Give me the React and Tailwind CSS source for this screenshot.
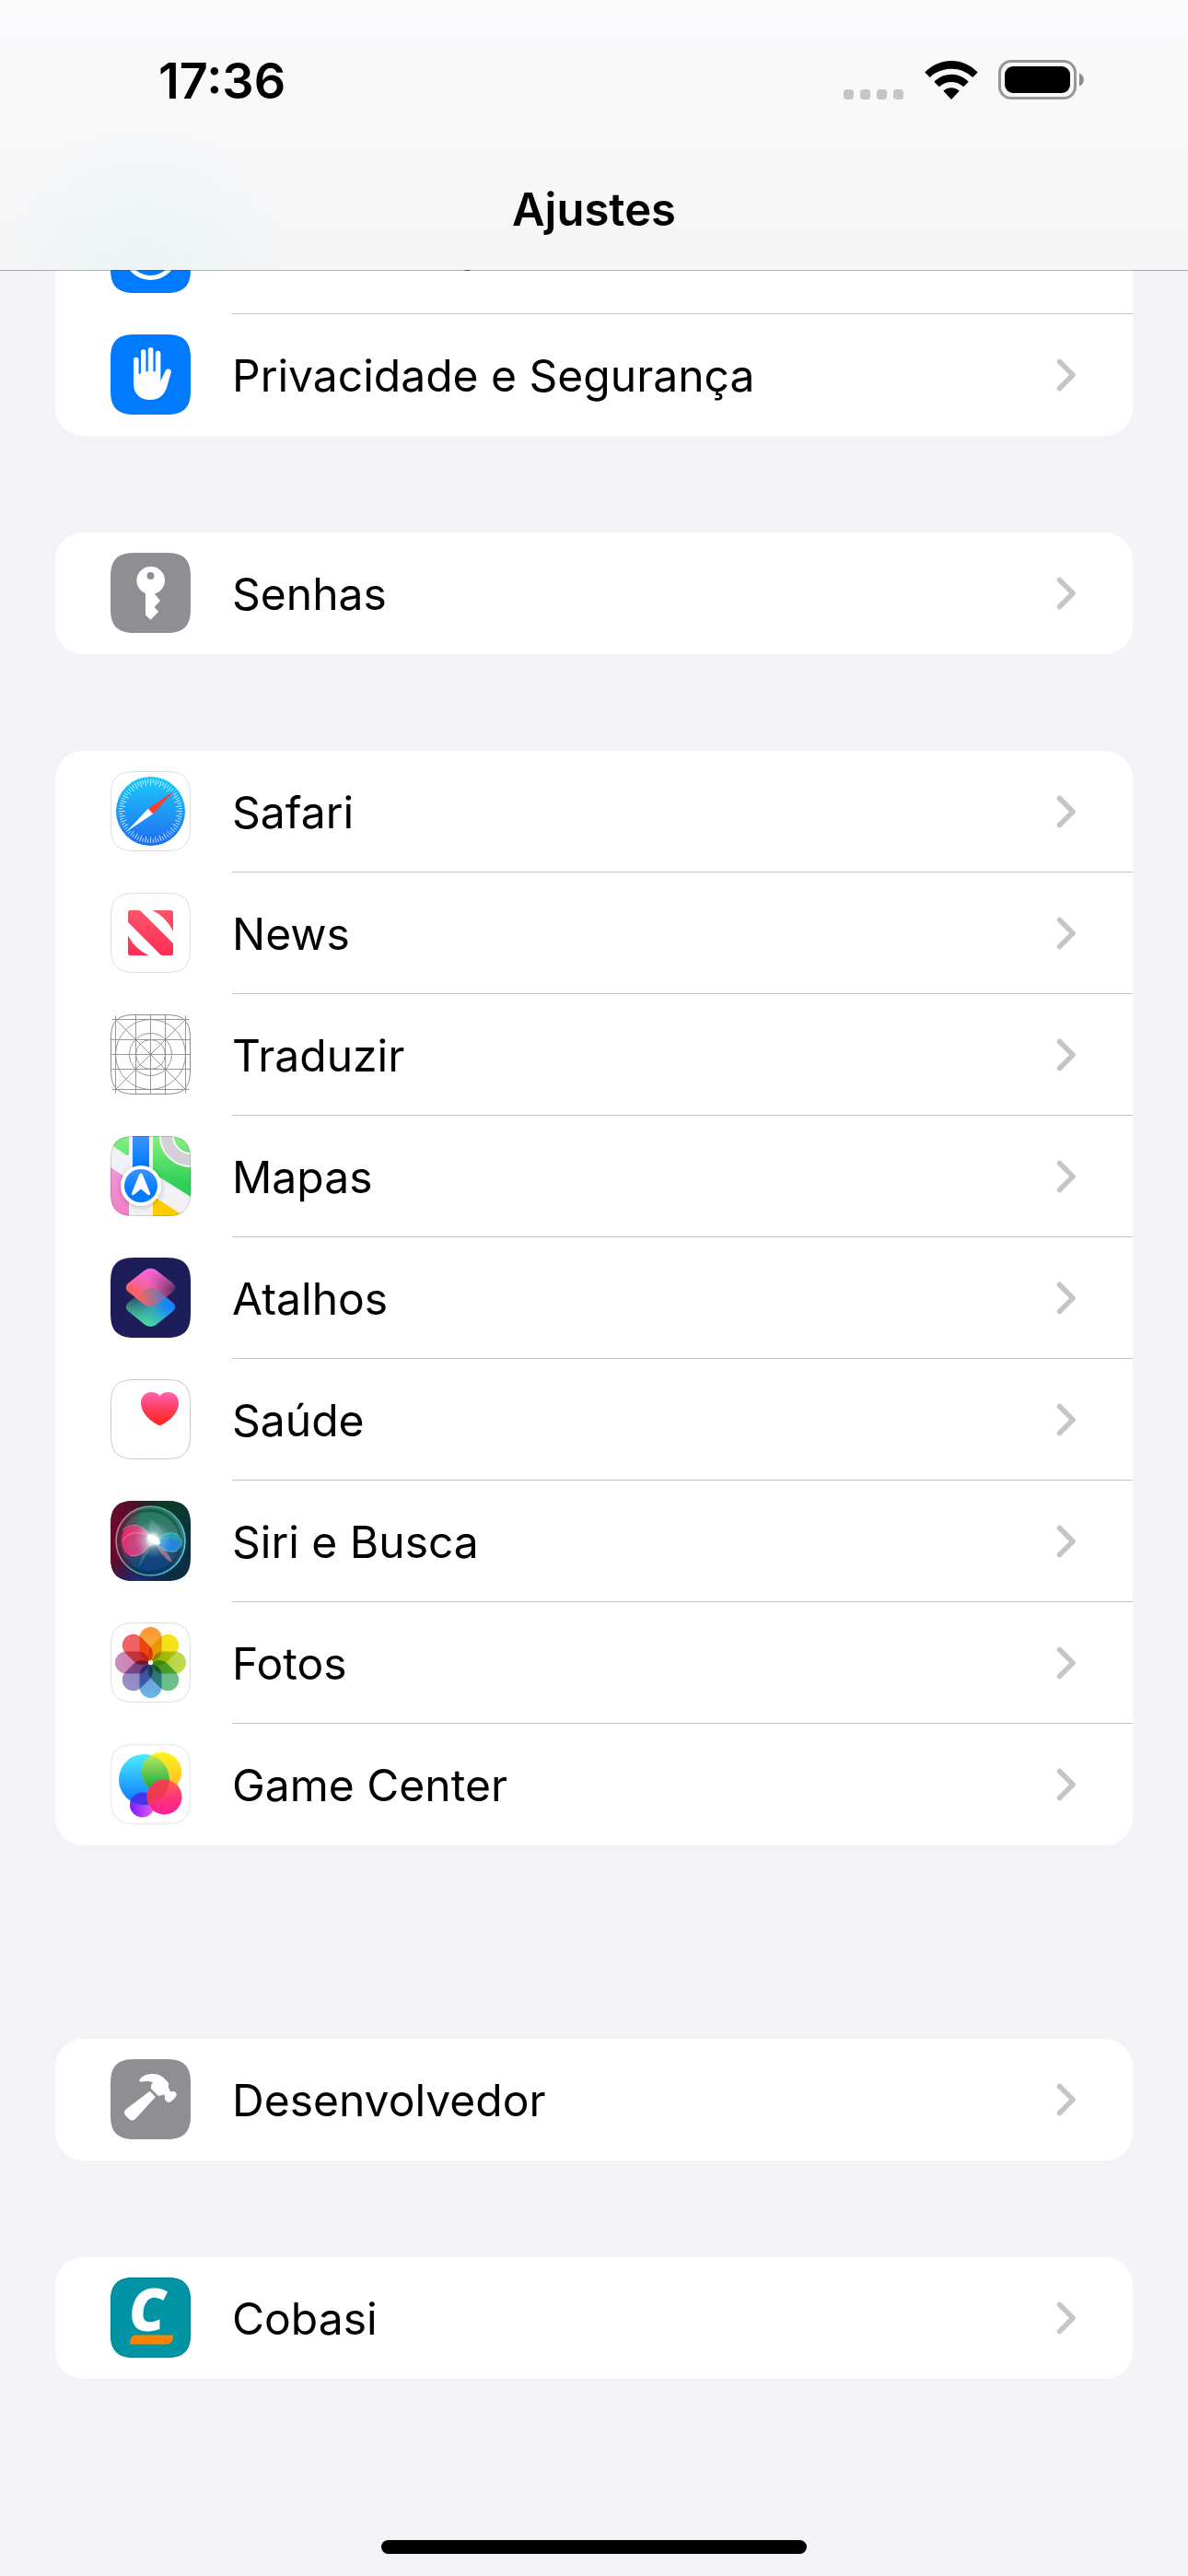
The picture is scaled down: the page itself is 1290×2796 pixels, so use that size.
import React from "react";

const Tile = ({ bg = "#fff", stroke, strokeWidth = 1, children }) => (
  <svg viewBox="0 0 87 87" className="mb-px size-[87px] shrink-0 overflow-visible" aria-hidden="true">
    <path d={SQ} fill={bg} />
    {children}
    {stroke && <path d={SQIN} fill="none" stroke={stroke} strokeWidth={strokeWidth} />}
  </svg>
);

const SQ =
  "M20 0.3C24 0 26 0 30 0H57C61 0 63 0 67 0.3C79 1.5 85.500 8 86.700 20C87 24 87 26 87 30V57C87 61 87 63 86.700 67C85.500 79 79 85.500 67 86.700C63 87 61 87 57 87H30C26 87 24 87 20 86.700C8 85.500 1.500 79 0.300 67C0 63 0 61 0 57V30C0 26 0 24 0.300 20C1.500 8 8 1.500 20 0.300Z";
const SQIN =
  "M20 0.8C24 0.500 26 0.500 30 0.500H57C61 0.500 63 0.500 67 0.800C79 2 85 8 86.200 20C86.500 24 86.500 26 86.500 30V57C86.500 61 86.500 63 86.200 67C85 79 79 85 67 86.200C63 86.500 61 86.500 57 86.500H30C26 86.500 24 86.500 20 86.200C8 85 2 79 0.800 67C0.500 63 0.500 61 0.500 57V30C0.500 26 0.500 24 0.800 20C2 8 8 2 20 0.800Z";

const AccessibilityIcon = () => (
  <Tile bg="#007aff">
    <circle cx="43.500" cy="43.500" r="27" fill="none" stroke="#fff" strokeWidth="5" />
    <circle cx="43.500" cy="29" r="4" fill="#fff" />
    <path d="M27 37l12 3v8l-5 11M60 37l-12 3v8l5 11" fill="none" stroke="#fff" strokeWidth="4" strokeLinecap="round" />
  </Tile>
);

const HandIcon = () => (
  <Tile bg="#007aff">
    <path
      fill="#fff"
      d="M25 27.500a2.800 2.800 0 0 1 5.600 0V43.300l2.400-1.300V19a2.700 2.700 0 0 1 5.400 0V40.500l2.400-0.500V16.800a2.800 2.800 0 0 1 5.600 0V40l2.400 0.500V20.500a2.800 2.800 0 0 1 5.600 0V50.500l5.200-11c1.500-3 7-2.600 6.200 1.500l-4.200 15C58.600 66 52.500 71 43 71S25 65.500 25 54Z"
    />
  </Tile>
);

const KeyIcon = () => (
  <Tile bg="#8e8e93">
    <path
      fill="#fff"
      fillRule="evenodd"
      d="M43.500 15a15 15 0 0 0-5.500 29V67.500l5.500 5.300 8.700-8.800-4.700-5 6.500-7-6.200-7.500A15 15 0 0 0 43.500 15Zm0 6a4 4 0 1 1 0 8 4 4 0 0 1 0-8Z"
    />
  </Tile>
);

const TICKS = Array.from({ length: 72 }, (_, i) => i);

const SafariIcon = () => (
  <Tile stroke="#dedede">
    <defs>
      <linearGradient id="safari" x1="0" y1="0" x2="0" y2="1">
        <stop offset="0" stopColor="#1ccbfb" />
        <stop offset="0.500" stopColor="#1e9bf6" />
        <stop offset="1" stopColor="#1f6cf0" />
      </linearGradient>
    </defs>
    <circle cx="43.500" cy="43.500" r="37.500" fill="url(#safari)" />
    {TICKS.map((i) => (
      <path
        key={i}
        d={i % 2 ? "M43.500 9v4" : "M43.500 9v6.500"}
        stroke="#fff"
        strokeWidth="0.800"
        opacity="0.900"
        transform={`rotate(${i * 5} 43.500 43.500)`}
      />
    ))}
    <path d="M70 21L40.800 40.800l5.400 5.400Z" fill="#ff3b30" />
    <path d="M17 66L40.800 40.800l5.400 5.400Z" fill="#fff" />
  </Tile>
);

const NewsIcon = () => (
  <Tile stroke="#dedede">
    <defs>
      <linearGradient id="news" x1="0" y1="19" x2="0" y2="68" gradientUnits="userSpaceOnUse">
        <stop offset="0" stopColor="#ff5468" />
        <stop offset="1" stopColor="#ff2d55" />
      </linearGradient>
    </defs>
    <g fill="url(#news)">
      <path d="M21.500 19H30q2 0 3.500 1.500L68 55V65.500q0 2.500-2.500 2.500H57q-2 0-3.500-1.500L19 32V21.500Q19 19 21.500 19Z" />
      <path d="M45.500 19H65.500Q68 19 68 21.500V41.500Q60 26 45.500 19Z" />
      <path d="M19 46V65.500Q19 68 21.500 68H41.500Q25 60 19 46Z" />
    </g>
  </Tile>
);

const TranslateIcon = () => (
  <Tile stroke="#8c8c8c">
    <g fill="none" stroke="#8c8c8c" strokeWidth="0.900">
      <path d="M5.500 1.500V85.500M81.500 1.500V85.500M27.500 0V87M43.500 0V87M59.500 0V87M1.500 5.500H85.500M1.500 81.500H85.500M0 27.500H87M0 43.500H87M0 59.500H87M5.500 5.500L81.500 81.500M81.500 5.500L5.500 81.500" />
      <circle cx="43.500" cy="43.500" r="38" />
      <circle cx="43.500" cy="43.500" r="23" />
      <circle cx="43.500" cy="43.500" r="16" />
    </g>
  </Tile>
);

const MapsIcon = () => (
  <Tile bg="#f1f1f6" stroke="#00000026">
    <defs>
      <clipPath id="mapsClip">
        <path d={SQ} />
      </clipPath>
      <linearGradient id="mapsGreen" x1="0" y1="0" x2="0" y2="60" gradientUnits="userSpaceOnUse">
        <stop offset="0" stopColor="#86f07f" />
        <stop offset="0.850" stopColor="#30d158" />
      </linearGradient>
      <linearGradient id="mapsPink" x1="0" y1="34" x2="0" y2="87" gradientUnits="userSpaceOnUse">
        <stop offset="0" stopColor="#ee9ad8" />
        <stop offset="1" stopColor="#f57cc6" />
      </linearGradient>
      <linearGradient id="mapsBlue" x1="0" y1="0" x2="0" y2="34" gradientUnits="userSpaceOnUse">
        <stop offset="0" stopColor="#3c93fc" />
        <stop offset="1" stopColor="#007aff" />
      </linearGradient>
      <linearGradient id="mapsPin" x1="0" y1="0" x2="0" y2="1">
        <stop offset="0" stopColor="#3c93fc" />
        <stop offset="0.700" stopColor="#007aff" />
      </linearGradient>
      <filter id="mapsShadow" x="-0.300" y="-0.300" width="1.600" height="1.600">
        <feDropShadow dx="0" dy="1" stdDeviation="3" floodColor="#000" floodOpacity="0.250" />
      </filter>
    </defs>
    <g clipPath="url(#mapsClip)">
      <path d="M0 9V0H20V19q0 3-3 1.500Z" fill="url(#mapsGreen)" />
      <path d="M46 0H87V66L46 40Z" fill="url(#mapsGreen)" />
      <path d="M0 34L20 47V87H0Z" fill="url(#mapsPink)" />
      <path d="M46 65L80 87H46Z" fill="#ffcc00" />
      <circle cx="87" cy="0" r="26" fill="none" stroke="#fff" strokeWidth="16" />
      <circle cx="87" cy="0" r="26" fill="none" stroke="#d1d1d6" strokeWidth="12.500" />
      <path d="M24 0H42V40H24Z" fill="url(#mapsBlue)" />
      <circle cx="33" cy="54" r="22" fill="#fff" filter="url(#mapsShadow)" />
      <circle cx="33" cy="54" r="18" fill="url(#mapsPin)" />
      <path d="M33 40.500c1 0 1.600 0.700 2 1.700L43 62c0.800 2-0.900 3-2.500 1.700L33 57.500l-7.500 6.200C23.900 65 22.200 64 23 62l8-19.800c0.400-1 1-1.700 2-1.700Z" fill="#fff" />
    </g>
  </Tile>
);

const DIAMOND_LOW = "M37 35q6.500-4.500 13 0L68 49q4.500 4.500 0 9L50 72.500q-6.500 4.500-13 0L19 58q-4.500-4.500 0-9Z";

const ShortcutsIcon = () => (
  <Tile bg="#1d1e59">
    <defs>
      <linearGradient id="scTop" x1="22" y1="45" x2="66" y2="25" gradientUnits="userSpaceOnUse">
        <stop offset="0" stopColor="#ff5f4f" />
        <stop offset="0.500" stopColor="#f062a8" />
        <stop offset="1" stopColor="#53285f" />
      </linearGradient>
      <linearGradient id="scPink" x1="0" y1="11" x2="0" y2="36" gradientUnits="userSpaceOnUse">
        <stop offset="0" stopColor="#ff66e8" />
        <stop offset="1" stopColor="#ff66c8" stopOpacity="0" />
      </linearGradient>
      <linearGradient id="scBottom" x1="24" y1="48" x2="66" y2="60" gradientUnits="userSpaceOnUse">
        <stop offset="0" stopColor="#2c5070" />
        <stop offset="0.500" stopColor="#2e97b8" />
        <stop offset="0.850" stopColor="#1684ff" />
      </linearGradient>
      <linearGradient id="scGreen" x1="40" y1="77" x2="48" y2="50" gradientUnits="userSpaceOnUse">
        <stop offset="0" stopColor="#4ae39a" />
        <stop offset="1" stopColor="#4ae39a" stopOpacity="0" />
      </linearGradient>
      <linearGradient id="scOver" x1="30" y1="45" x2="58" y2="40" gradientUnits="userSpaceOnUse">
        <stop offset="0" stopColor="#ff6257" stopOpacity="0.900" />
        <stop offset="1" stopColor="#4b7fc4" stopOpacity="0.850" />
      </linearGradient>
      <clipPath id="scTopClip">
        <path d="M37 14q6.500-4.500 13 0L68 28q4.500 4.500 0 9L50 51q-6.500 4.500-13 0L19 37q-4.500-4.500 0-9Z" />
      </clipPath>
    </defs>
    <path d={DIAMOND_LOW} fill="url(#scBottom)" />
    <path d={DIAMOND_LOW} fill="url(#scGreen)" />
    <g clipPath="url(#scTopClip)">
      <path d="M10 5H77V60H10Z" fill="url(#scTop)" />
      <path d="M10 5H77V60H10Z" fill="url(#scPink)" />
      <path d={DIAMOND_LOW} fill="url(#scOver)" />
    </g>
  </Tile>
);

const HealthIcon = () => (
  <Tile stroke="#c8c8c8">
    <defs>
      <linearGradient id="health" x1="0" y1="0" x2="0" y2="1">
        <stop offset="0" stopColor="#ff63b4" />
        <stop offset="0.500" stopColor="#ff3c60" />
        <stop offset="1" stopColor="#ff2616" />
      </linearGradient>
    </defs>
    <path d="M53.500 18C50.500 14.500 47.500 14 44.500 14C37.500 14 33 19.500 33 26C33 37 44 46 51.500 49.500Q53.500 50.500 55.500 49.500C63 46 74 37 74 26C74 19.500 69.500 14 62.500 14C59.500 14 56.500 14.500 53.500 18Z" fill="url(#health)" />
  </Tile>
);

const SiriIcon = () => (
  <Tile bg="#0d2f42">
    <defs>
      <clipPath id="siriClip">
        <path d={SQ} />
      </clipPath>
      <linearGradient id="siriRed" x1="0" y1="30" x2="46" y2="34" gradientUnits="userSpaceOnUse">
        <stop offset="0" stopColor="#6e0a2e" />
        <stop offset="0.500" stopColor="#560a2a" stopOpacity="0.900" />
        <stop offset="1" stopColor="#3a0a24" stopOpacity="0" />
      </linearGradient>
      <radialGradient id="siriBlue" cx="30" cy="90" r="36" gradientUnits="userSpaceOnUse">
        <stop offset="0" stopColor="#1c2c80" />
        <stop offset="1" stopColor="#1a2468" stopOpacity="0" />
      </radialGradient>
      <radialGradient id="siriGreen" cx="60" cy="5" r="55" gradientUnits="userSpaceOnUse">
        <stop offset="0" stopColor="#0d3a2a" />
        <stop offset="1" stopColor="#0d3a2a" stopOpacity="0" />
      </radialGradient>
      <linearGradient id="siriOrb" x1="0" y1="6" x2="0" y2="81" gradientUnits="userSpaceOnUse">
        <stop offset="0" stopColor="#1f7a5c" />
        <stop offset="0.400" stopColor="#3c7c74" />
        <stop offset="0.650" stopColor="#2c5070" />
        <stop offset="1" stopColor="#0a3f80" />
      </linearGradient>
      <linearGradient id="siriShade" x1="6" y1="40" x2="30" y2="44" gradientUnits="userSpaceOnUse">
        <stop offset="0" stopColor="#8c1240" stopOpacity="0.950" />
        <stop offset="1" stopColor="#8c1240" stopOpacity="0" />
      </linearGradient>
      <linearGradient id="siriRim" x1="6" y1="30" x2="81" y2="60" gradientUnits="userSpaceOnUse">
        <stop offset="0" stopColor="#d87090" />
        <stop offset="0.500" stopColor="#50b090" />
        <stop offset="1" stopColor="#4fd0ee" />
      </linearGradient>
      <radialGradient id="siriGlow" cx="46" cy="42" r="20" gradientUnits="userSpaceOnUse">
        <stop offset="0" stopColor="#fff" />
        <stop offset="0.250" stopColor="#f2ffff" stopOpacity="0.850" />
        <stop offset="0.500" stopColor="#b8e6e0" stopOpacity="0.350" />
        <stop offset="1" stopColor="#b8e6e0" stopOpacity="0" />
      </radialGradient>
      <linearGradient id="siriPetal" x1="12" y1="0" x2="46" y2="0" gradientUnits="userSpaceOnUse">
        <stop offset="0" stopColor="#f5245f" />
        <stop offset="0.600" stopColor="#e04a84" />
        <stop offset="1" stopColor="#ffc8dc" />
      </linearGradient>
    </defs>
    <g clipPath="url(#siriClip)">
      <path d="M0 0H87V87H0Z" fill="url(#siriGreen)" />
      <path d="M0 0H87V87H0Z" fill="url(#siriRed)" />
      <path d="M0 0H87V87H0Z" fill="url(#siriBlue)" />
      <circle cx="43.500" cy="43.500" r="37.500" fill="url(#siriOrb)" />
      <circle cx="43.500" cy="43.500" r="37.500" fill="url(#siriShade)" stroke="url(#siriRim)" strokeWidth="1.600" />
      <circle cx="42.500" cy="44" r="33.500" fill="none" stroke="#06251f" strokeWidth="3" opacity="0.350" />
      <path d="M44 20C56 28 62 42 62 55L48 44L30 73C34 60 38 50 44 20Z" fill="#8fc4c4" opacity="0.250" />
      <path d="M48 45L64 68C55 78 34 76 30 73Z" fill="#0a4488" opacity="0.550" />
      <path d="M48 45C58 50 64 58 67 67C60 64 52 55 48 45Z" fill="#e08ca0" opacity="0.600" />
      <path d="M47 43C38 26 24 24 16 31C9 41 12 58 23 60C35 61 40 50 47 43Z" fill="url(#siriPetal)" opacity="0.950" />
      <path d="M48 43C36 32 20 33 14 43C10 52 20 62 30 58C38 54 42 46 48 43Z" fill="#b04a90" opacity="0.400" />
      <path d="M48 43C37 32 18 32 13 44M47 43C38 26 24 22 13 32M47 43C40 52 32 63 21 59" fill="none" stroke="#ff9ac8" strokeWidth="0.900" opacity="0.750" />
      <path d="M48 44C56 36 66 32 73 37C80 43 77 54 68 55C60 56 54 50 48 44Z" fill="#22a8cc" opacity="0.750" stroke="#58e8e8" strokeWidth="1" />
      <path d="M48 44C58 40 68 40 76 46C76 52 71 55 65 54C58 53 53 49 48 44Z" fill="#2880e8" opacity="0.800" />
      <circle cx="46" cy="42" r="20" fill="url(#siriGlow)" />
      <ellipse cx="47" cy="42" rx="8" ry="4" fill="#fff" transform="rotate(35 47 42)" />
    </g>
  </Tile>
);

const PETALS = [
  ["#f7963a", "#fdbb2e"],
  ["#fde21a", "#e2dc16"],
  ["#c3dc4e", "#a3cf3c"],
  ["#6dc282", "#62b99c"],
  ["#6bb6e8", "#6a94cc"],
  ["#9a92c8", "#8a80b8"],
  ["#cb8cc0", "#cf7ca4"],
  ["#f2606c", "#ee6348"],
];

const PhotosIcon = () => (
  <Tile stroke="#dedede">
    <defs>
      {PETALS.map(([a, b], i) => (
        <linearGradient key={i} id={`petal${i}`} x1="0" y1="0" x2="0" y2="1">
          <stop offset="0" stopColor={a} />
          <stop offset="1" stopColor={b} />
        </linearGradient>
      ))}
    </defs>
    <g className="isolate">
      {PETALS.map((_, i) => (
        <rect
          key={i}
          x="31.500"
          y="5"
          width="24"
          height="37"
          rx="12"
          fill={`url(#petal${i})`}
          transform={`rotate(${i * 45} 43.500 43.500)`}
          className="mix-blend-multiply"
        />
      ))}
    </g>
    <circle cx="43.500" cy="43.500" r="2.600" fill="#fff" />
  </Tile>
);

const GameCenterIcon = () => (
  <Tile stroke="#f0f0f0" strokeWidth="2">
    <defs>
      <linearGradient id="gcBlue" x1="0" y1="0" x2="0" y2="1">
        <stop offset="0" stopColor="#4cecff" />
        <stop offset="1" stopColor="#0a74ff" />
      </linearGradient>
      <linearGradient id="gcYellow" x1="0" y1="0" x2="0" y2="1">
        <stop offset="0" stopColor="#fff41c" />
        <stop offset="1" stopColor="#ffb32c" />
      </linearGradient>
      <linearGradient id="gcGreen" x1="0" y1="12" x2="0" y2="50" gradientUnits="userSpaceOnUse">
        <stop offset="0" stopColor="#b8e860" />
        <stop offset="1" stopColor="#0ea83c" />
      </linearGradient>
      <linearGradient id="gcPurple" x1="0" y1="0" x2="1" y2="0">
        <stop offset="0" stopColor="#7a1cff" />
        <stop offset="1" stopColor="#e860f0" />
      </linearGradient>
      <linearGradient id="gcPink" x1="0" y1="0" x2="0" y2="1">
        <stop offset="0" stopColor="#ff6a48" />
        <stop offset="0.450" stopColor="#ff3a70" />
        <stop offset="1" stopColor="#ff1c98" />
      </linearGradient>
      <clipPath id="gcBlueClip">
        <circle cx="36.500" cy="38.500" r="27.500" />
      </clipPath>
    </defs>
    <circle cx="34.500" cy="66" r="13.500" fill="url(#gcPurple)" />
    <circle cx="36.500" cy="38.500" r="27.500" fill="url(#gcBlue)" />
    <circle cx="55.500" cy="30.500" r="21.700" fill="url(#gcYellow)" />
    <g clipPath="url(#gcBlueClip)">
      <circle cx="55.500" cy="30.500" r="21.700" fill="url(#gcGreen)" />
      <circle cx="34.500" cy="66" r="13.500" fill="#4634e8" />
    </g>
    <circle cx="58.500" cy="57.500" r="19" fill="url(#gcPink)" />
    <g clipPath="url(#gcBlueClip)">
      <circle cx="58.500" cy="57.500" r="19" fill="#e83a4e" opacity="0.800" />
    </g>
  </Tile>
);

const HammerIcon = () => (
  <Tile bg="#8e8e93">
    <path
      fill="#fff"
      d="M31.500 22.500C34 18 40 16 46 16C53 16 57 19 60 22.500L62.500 25C64 27 62 29.500 63.500 32L65 35C66.500 36 68 34 70 35.500L71.500 37.500C72.500 39 70 42 68 44L65 46.500C62.500 48 60 45.500 59 43.500C58.500 41 60 40 57.500 38.500L52 40L44 32V28.500L46 25.500C42 23.500 38 24 34.500 24.500C32 25 31 24 31.500 22.500Z"
    />
    <path fill="#fff" stroke="#fff" strokeWidth="2" strokeLinejoin="round" d="M42.500 36L47.500 41L26 64.500q-2.500 2-5 0l-4-4q-2-2.500 0-5Z" />
  </Tile>
);

const CobasiIcon = () => (
  <Tile bg="#0094a5" stroke="#007f8e">
    <text x="20" y="58" fill="#fff" fontSize="63" fontWeight="800" fontStyle="italic" className="font-['Open_Sans','Noto_Sans',sans-serif]">
      C
    </text>
    <path fill="#ff8200" d="M28 62.500H68C68 69 66 72.500 60 72.500H21C21 66 23 62.500 28 62.500Z" />
  </Tile>
);

const Chevron = () => (
  <svg viewBox="0 0 22 36" className="h-9 w-[22px] shrink-0" aria-hidden="true">
    <path d="M3.500 3.500L18 18L3.500 32.500" fill="none" stroke="#c5c5c7" strokeWidth="5.500" strokeLinecap="round" strokeLinejoin="round" />
  </svg>
);

const GROUPS = [
  {
    id: "system",
    className: "rounded-b-[30px]",
    rows: [
      ["Acessibilidade", AccessibilityIcon],
      ["Privacidade e Segurança", HandIcon],
    ],
  },
  { id: "passwords", className: "mt-[105px] rounded-[30px]", rows: [["Senhas", KeyIcon]] },
  {
    id: "apps",
    className: "mt-[105px] rounded-[30px]",
    rows: [
      ["Safari", SafariIcon],
      ["News", NewsIcon],
      ["Traduzir", TranslateIcon],
      ["Mapas", MapsIcon],
      ["Atalhos", ShortcutsIcon],
      ["Saúde", HealthIcon],
      ["Siri e Busca", SiriIcon],
      ["Fotos", PhotosIcon],
      ["Game Center", GameCenterIcon],
    ],
  },
  { id: "developer", className: "mt-[210px] rounded-[30px]", rows: [["Desenvolvedor", HammerIcon]] },
  { id: "thirdparty", className: "mt-[105px] rounded-[30px]", rows: [["Cobasi", CobasiIcon]] },
];

const Row = ({ label, Icon, last }) => (
  <li>
    <a href="#" className="flex h-[132px] items-center pl-[60px]">
      <Icon />
      <span
        className={`ml-[45px] flex h-full min-w-0 flex-1 items-center justify-between border-b pr-[61px] ${
          last ? "border-transparent" : "border-[#c6c6c8]"
        }`}
      >
        <span className="truncate pt-[2px] text-[48px] leading-[64px]">{label}</span>
        <Chevron />
      </span>
    </a>
  </li>
);

const StatusBar = () => (
  <div className="flex h-[173px] items-center justify-between pl-[172px] pr-[112px]">
    <time className="pt-[2px] text-[54px] leading-[64px] font-semibold">17:36</time>
    <div className="flex items-center">
      <svg viewBox="0 0 66 42" className="mr-[22px] h-[42px] w-[66px]" role="img" aria-label="Sem sinal">
        {[0, 18, 36, 54].map((x) => (
          <rect key={x} x={x} y="31" width="11" height="11" rx="3.500" fill="#c5c5c6" />
        ))}
      </svg>
      <svg viewBox="0 0 58 42" className="mr-[22px] h-[42px] w-[58px]" role="img" aria-label="Wi-Fi">
        <path d="M0.300 12.600C16 -4.200 42 -4.200 57.700 12.600L52.300 18C39.500 5.500 18.500 5.500 5.700 18Z" />
        <path d="M10.300 22.700C21 12.200 37 12.200 47.700 22.700L42.200 28.200C34.500 21.200 23.500 21.200 15.800 28.200Z" />
        <path d="M20.300 32.800C25.500 28.200 32.500 28.200 37.700 32.800L29 42Z" />
      </svg>
      <svg viewBox="0 0 94 43" className="h-[43px] w-[94px]" role="img" aria-label="Bateria">
        <rect x="1.500" y="1.500" width="82" height="40" rx="12.500" fill="none" stroke="#979797" strokeWidth="3" />
        <rect x="7" y="7" width="71" height="29" rx="9" />
        <path d="M88 14.500C94.300 17 94.300 26 88 28.500Z" fill="#8a8a8a" />
      </svg>
    </div>
  </div>
);

export default function App() {
  return (
    <div className="relative min-h-screen bg-[#f2f2f7] font-['Inter','Liberation_Sans',sans-serif] text-black">
      <header className="absolute inset-x-0 top-0 z-10 border-b border-[#3c3c4366] bg-linear-to-b from-[#fafafc] via-[#f8f8f9] to-[#f5f5f5] bg-clip-padding">
        <div className="bg-[radial-gradient(circle_at_12%_100%,#ebf4f7_0%,#f5f6f700_14%)]">
          <StatusBar />
          <h1 className="flex h-[120px] items-center justify-center pb-[10px] text-[49px] leading-[64px] font-semibold">Ajustes</h1>
        </div>
      </header>
      <main className="px-[60px] pt-[209px]">
        {GROUPS.map((group) => (
          <ul key={group.id} className={`overflow-hidden bg-white ${group.className}`}>
            {group.rows.map(([label, Icon], i) => (
              <Row key={label} label={label} Icon={Icon} last={i === group.rows.length - 1} />
            ))}
          </ul>
        ))}
      </main>
      <div className="mx-auto mt-[175px] h-[15px] w-[462px] rounded-full bg-black" />
    </div>
  );
}
